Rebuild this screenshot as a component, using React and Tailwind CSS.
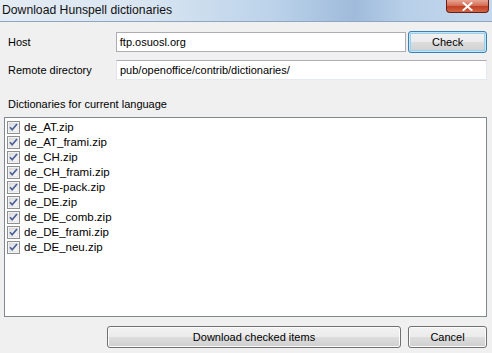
import React from 'react';

const files = [
  'de_AT.zip',
  'de_AT_frami.zip',
  'de_CH.zip',
  'de_CH_frami.zip',
  'de_DE-pack.zip',
  'de_DE.zip',
  'de_DE_comb.zip',
  'de_DE_frami.zip',
  'de_DE_neu.zip',
];

const CheckBox = () => (
  <svg width="13" height="13" viewBox="0 0 13 13" className="shrink-0">
    <defs>
      <linearGradient id="cbg" x1="0" y1="0" x2="1" y2="1">
        <stop offset="0" stopColor="#dcdcdc" />
        <stop offset="1" stopColor="#fbfbfb" />
      </linearGradient>
    </defs>
    <rect x="0.5" y="0.5" width="12" height="12" fill="#fff" stroke="#8e8f8f" />
    <rect x="2" y="2" width="9" height="9" fill="url(#cbg)" stroke="#cfd1d6" strokeWidth="0.6" />
    <path d="M3 6.2 L5.2 8.8 L10 3" fill="none" stroke="#4a5f97" strokeWidth="1.7" />
  </svg>
);

const Button = ({ children, className = '', focused = false }) => (
  <button
    className={`h-[22px] rounded-[3px] border text-[11px] text-black ${
      focused
        ? 'border-[#3c7fb1] shadow-[inset_0_0_0_1px_#c4e5f6,inset_0_0_0_2px_#98d1ef]'
        : 'border-[#707070] shadow-[inset_0_0_0_1px_#fcfcfc]'
    } bg-[linear-gradient(to_bottom,#f2f2f2_0%,#ebebeb_50%,#dddddd_51%,#cfcfcf_100%)] ${className}`}
  >
    {children}
  </button>
);

export default function App() {
  return (
    <div
      className="w-[492px] h-[353px] bg-[#f0f0f0] flex flex-col overflow-hidden text-black"
      style={{ fontFamily: '"Segoe UI", "Liberation Sans", Arial, sans-serif' }}
    >
      {/* Title bar */}
      <div className="h-[22px] shrink-0 flex justify-between items-start border-b border-[#8ea6bf] bg-[linear-gradient(to_right,#e4ecf4_0%,#d8e5f1_30%,#bcd3ea_55%,#9fbbdb_72%,#b7cfe8_82%,#c4d9ee_100%)]">
        <span className="pl-[2px] pt-[2px] text-[12.2px] leading-[17px] text-[#111]">Download Hunspell dictionaries</span>
        <div className="mr-[3px] w-[43px] h-[13px] rounded-b-[4px] border border-t-0 border-[#6b2016] bg-[linear-gradient(to_bottom,#e8a493_0%,#d4705a_45%,#c23f22_55%,#d26848_100%)] flex items-center justify-center">
          <svg width="11" height="9" viewBox="0 0 11 9">
            <path d="M1.5 1 L9.5 8 M9.5 1 L1.5 8" stroke="#fff" strokeWidth="2" strokeLinecap="square" />
          </svg>
        </div>
      </div>

      {/* Body */}
      <div className="flex flex-col pl-[4px] pr-[5px] text-[11px]">
        <div className="flex items-center mt-[10px] h-[20px]">
          <span className="w-[112px] pl-[4px]">Host</span>
          <div className="w-[291px] h-[20px] bg-white border border-[#abadb3] pl-[3px] flex items-center">ftp.osuosl.org</div>
          <Button focused className="ml-[2px] w-[79px]">Check</Button>
        </div>
        <div className="flex items-center mt-[8px] h-[20px]">
          <span className="w-[112px] pl-[4px]">Remote directory</span>
          <div className="flex-1 h-[20px] bg-white border border-[#e3e9ef] border-t-[#abadb3] border-l-[#e2e3ea] pl-[3px] flex items-center">
            pub/openoffice/contrib/dictionaries/
          </div>
        </div>
        <div className="mt-[17px] pl-[4px] h-[15px] leading-[15px]">Dictionaries for current language</div>
        <div className="mt-[5px] h-[200px] bg-white border border-[#828790] pt-[2px] pl-[2px]">
          {files.map((f) => (
            <div key={f} className="flex items-center h-[15px] gap-[4px]">
              <CheckBox />
              <span className="leading-[15px] text-[11.5px]">{f}</span>
            </div>
          ))}
        </div>
        <div className="flex justify-end mt-[9px] gap-[7px]">
          <Button className="w-[294px]">Download checked items</Button>
          <Button className="w-[79px]">Cancel</Button>
        </div>
      </div>
    </div>
  );
}
